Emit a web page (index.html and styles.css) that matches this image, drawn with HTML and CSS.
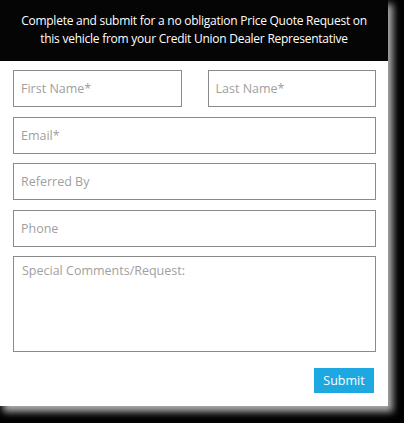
FILE: index.html
```html
<!DOCTYPE html>
<html>
<head>
<meta charset="utf-8">
<link rel="stylesheet" href="styles.css">
</head>
<body>
<div class="card">
  <div class="header">Complete and submit for a no obligation Price Quote Request on<br>this vehicle from your Credit Union Dealer Representative</div>
  <form class="form">
    <div class="row">
      <input class="field" type="text" placeholder="First Name*">
      <input class="field" type="text" placeholder="Last Name*">
    </div>
    <input class="field" type="text" placeholder="Email*">
    <input class="field" type="text" placeholder="Referred By">
    <input class="field" type="text" placeholder="Phone">
    <textarea class="field area" placeholder="Special Comments/Request:"></textarea>
    <div class="actions"><button class="submit" type="button">Submit</button></div>
  </form>
</div>
</body>
</html>
```
FILE: styles.css
```css
html, body {
  margin: 0;
  padding: 0;
  background: #000;
}
body {
  width: 404px;
  height: 423px;
  overflow: hidden;
  font-family: "Open Sans", "Liberation Sans", sans-serif;
}
.card {
  width: 388px;
  height: 406px;
  background: #fff;
  box-shadow: 4px 5px 7px 1px #aaa;
  display: flex;
  flex-direction: column;
}
.header {
  height: 61px;
  box-sizing: border-box;
  background: #050505;
  color: #fff;
  font-size: 12px;
  line-height: 18px;
  text-align: center;
  padding-top: 12px;
  letter-spacing: -0.25px;
}
.form {
  display: flex;
  flex-direction: column;
  gap: 9.5px;
  padding: 9px 12px 0 13px;
  margin: 0;
}
.row {
  display: flex;
  gap: 26px;
}
.row .field {
  flex: 1;
  min-width: 0;
}
.field {
  box-sizing: border-box;
  height: 37px;
  margin: 0;
  border: 1px solid #8a8a8a;
  border-radius: 0;
  background: #fff;
  padding: 0 7px;
  font-family: "Open Sans", "Liberation Sans", sans-serif;
  font-size: 12.5px;
  color: #555;
  outline: none;
}
.field::placeholder {
  color: #a0a0a0;
}
.area {
  height: 96px;
  resize: none;
  padding: 5px 8px;
  display: block;
}
.actions {
  display: flex;
  justify-content: flex-end;
  padding-top: 6px;
}
.submit {
  width: 60px;
  height: 25px;
  border: none;
  background: #1ea8e1;
  color: #fff;
  font-family: "Open Sans", "Liberation Sans", sans-serif;
  font-size: 12.5px;
  padding: 0;
  margin-right: 2px;
}
```
